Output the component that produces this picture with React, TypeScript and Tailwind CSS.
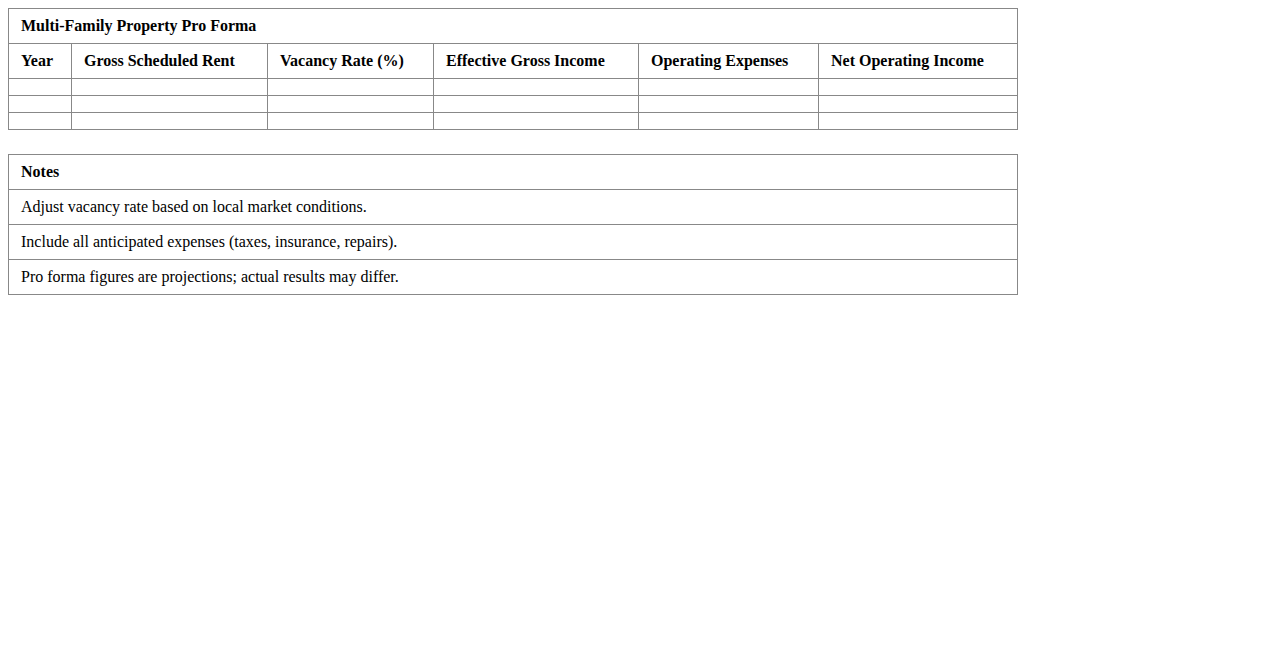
export default function App() {
  const headers = [
    "Year",
    "Gross Scheduled Rent",
    "Vacancy Rate (%)",
    "Effective Gross Income",
    "Operating Expenses",
    "Net Operating Income",
  ];
  const widths = ["w-[63px]", "w-[196px]", "w-[166px]", "w-[205px]", "w-[180px]", "w-[199px]"];
  const notes = [
    "Adjust vacancy rate based on local market conditions.",
    "Include all anticipated expenses (taxes, insurance, repairs).",
    "Pro forma figures are projections; actual results may differ.",
  ];

  return (
    <div className="p-2 font-['Liberation_Serif','Times_New_Roman',serif] text-[16px] leading-[18px] text-black bg-white min-h-screen">
      <table className="w-[1010px] table-fixed border-collapse">
        <colgroup>
          {widths.map((w, i) => (
            <col key={i} className={w} />
          ))}
        </colgroup>
        <thead>
          <tr>
            <th colSpan={6} className="border border-[#888] px-3 py-2 text-left font-bold">
              Multi-Family Property Pro Forma
            </th>
          </tr>
          <tr>
            {headers.map((h) => (
              <th key={h} className="border border-[#888] px-3 py-2 text-left font-bold">
                {h}
              </th>
            ))}
          </tr>
        </thead>
        <tbody>
          {[0, 1, 2].map((r) => (
            <tr key={r}>
              {headers.map((h) => (
                <td key={h} className="border border-[#888] px-3 py-2"></td>
              ))}
            </tr>
          ))}
        </tbody>
      </table>

      <table className="mt-6 w-[1010px] border-collapse">
        <thead>
          <tr>
            <th className="border border-[#888] px-3 py-2 text-left font-bold">Notes</th>
          </tr>
        </thead>
        <tbody>
          {notes.map((n) => (
            <tr key={n}>
              <td className="border border-[#888] px-3 py-2">{n}</td>
            </tr>
          ))}
        </tbody>
      </table>
    </div>
  );
}
